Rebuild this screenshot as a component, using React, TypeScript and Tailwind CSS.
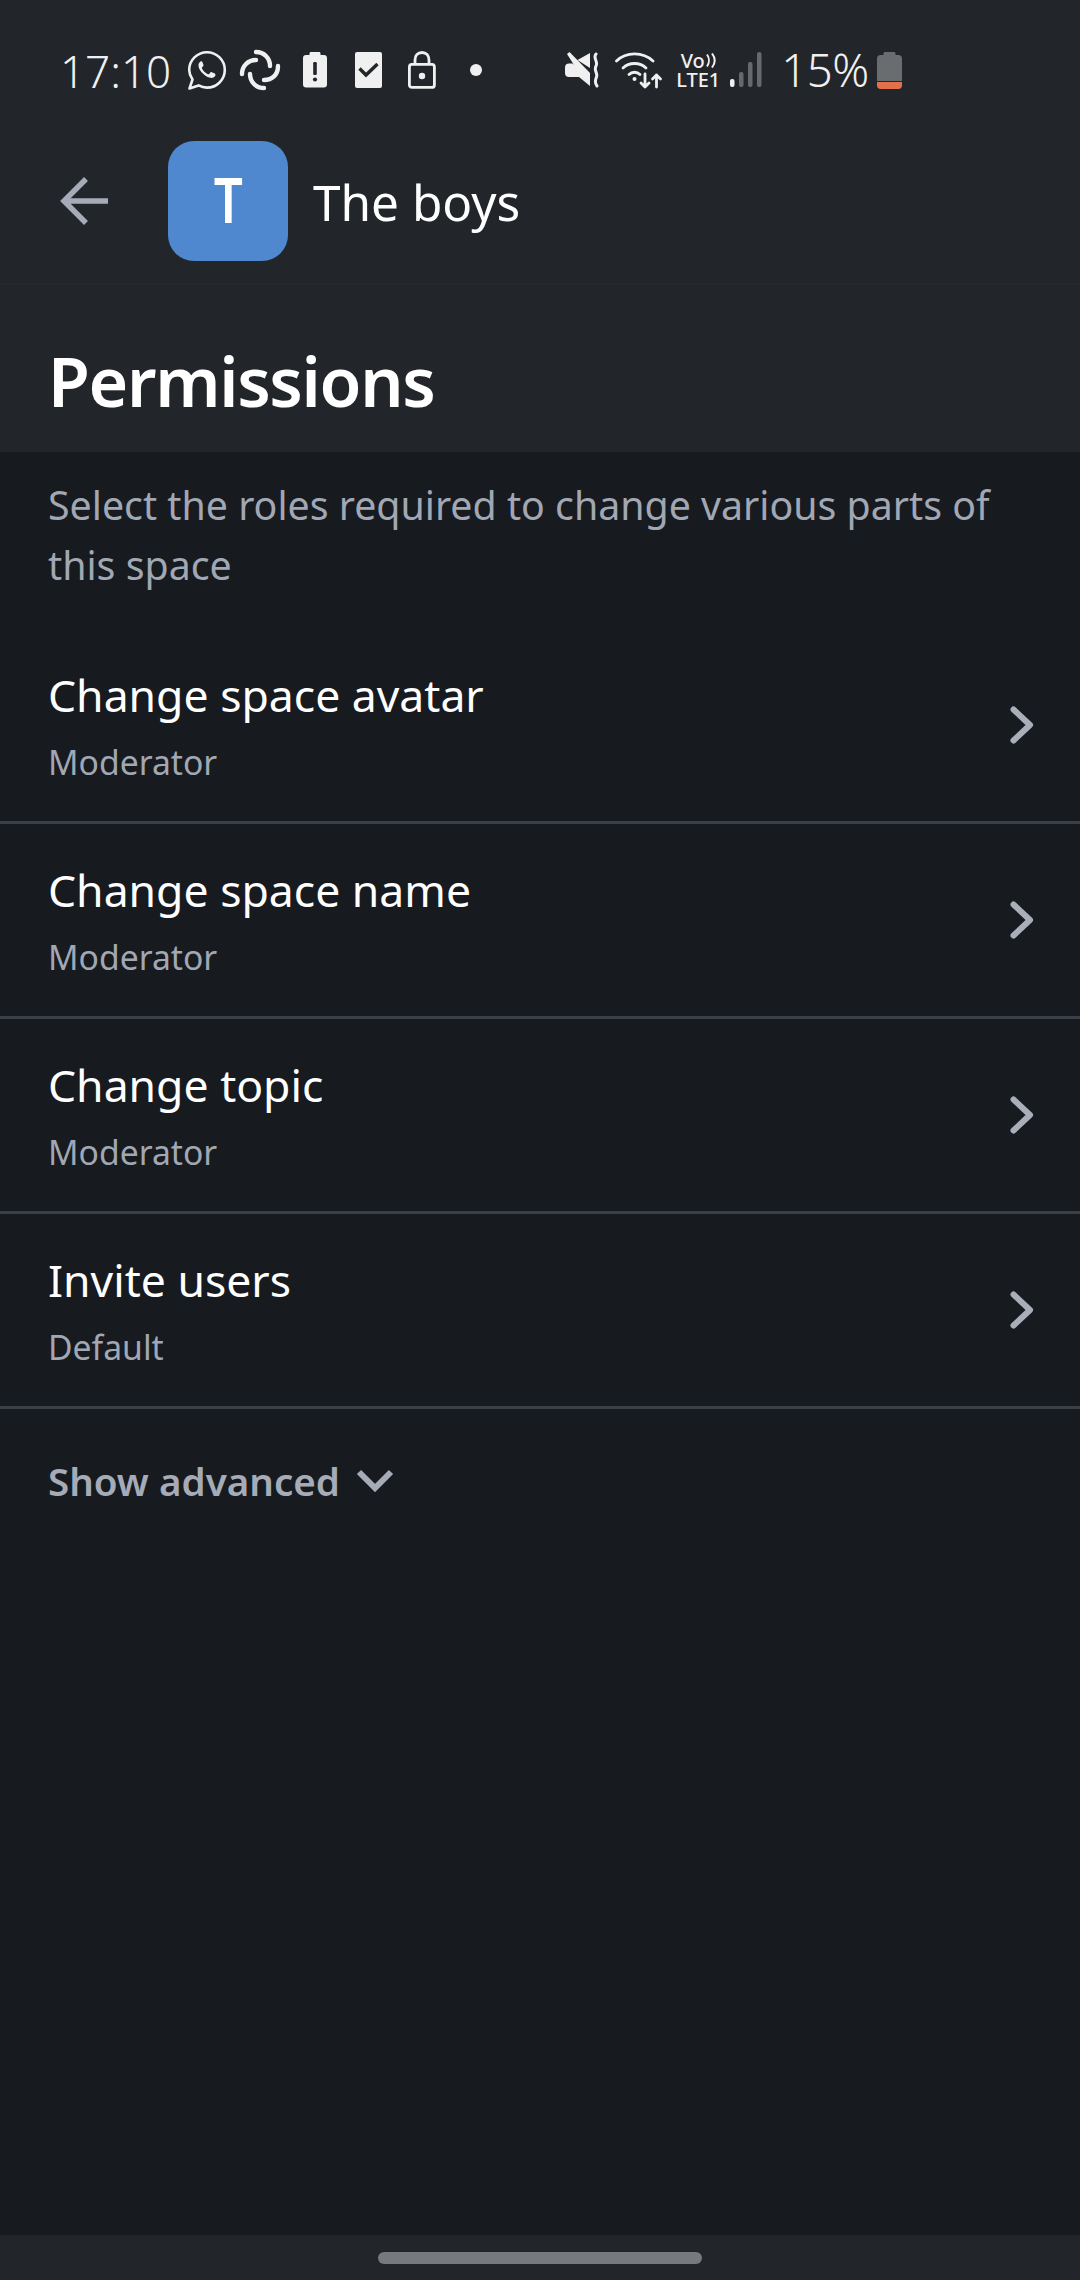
const FONT = "font-['Noto_Sans','Open_Sans',sans-serif]";

const rows = [
  { title: "Change space avatar", role: "Moderator" },
  { title: "Change space name", role: "Moderator" },
  { title: "Change topic", role: "Moderator" },
  { title: "Invite users", role: "Default" },
];

function StatusLeftIcons() {
  return (
    <div className="flex items-center">
      {/* whatsapp */}
      <svg width="40" height="42" viewBox="0 0 40 42" className="ml-[16px]" fill="none">
        <path d="M2.5 39.5 L5.5 30.5 C3.5 27.5 2.2 24.5 2.2 21 C2.2 11.2 10.2 3.2 20 3.2 C29.8 3.2 37.8 11.2 37.8 21 C37.8 30.8 29.8 38.6 20 38.6 C17 38.6 14.2 37.8 11.6 36.4 Z" stroke="#f0f0f0" strokeWidth="2.6" strokeLinejoin="round" />
        <path d="M13.5 12.5 C12 13.5 11.2 15.2 11.6 17.4 C12.4 21.6 17.6 27.6 23.4 28.8 C25.6 29.2 27.6 28.2 28.4 26.4 C28.6 25.6 28.4 25 27.8 24.6 L24.8 23.2 C24.2 23 23.8 23 23.4 23.6 L22.2 25 C21.8 25.4 21.4 25.4 20.8 25.2 C18.2 24 16.2 22 15 19.6 C14.8 19 14.8 18.6 15.2 18.2 L16.2 17 C16.6 16.6 16.6 16.2 16.4 15.6 L15.2 12.8 C14.8 12.2 14.2 12.2 13.5 12.5 Z" fill="#f0f0f0" />
      </svg>
      {/* element */}
      <svg width="42" height="44" viewBox="0 0 42 44" className="ml-[12px]" fill="none" stroke="#f0f0f0" strokeWidth="4.4" strokeLinecap="round">
        <path d="M17 4 C25 4 31 10 31 18" />
        <path d="M39 18 C39 27 33 32 25 32" />
        <path d="M25 40 C17 40 11 34 11 26" />
        <path d="M3 26 C3 18 9 12 17 12" />
      </svg>
      {/* battery alert */}
      <svg width="24" height="36" viewBox="0 0 24 36" className="ml-[22px]">
        <path d="M8 0 H16 C17 0 17.5 .6 17.5 1.6 V3 H21 C22.8 3 24 4.2 24 6 V32.5 C24 34.4 22.8 35.5 21 35.5 H3 C1.2 35.5 0 34.4 0 32.5 V6 C0 4.2 1.2 3 3 3 H6.5 V1.6 C6.5 .6 7 0 8 0 Z" fill="#f0f0f0" />
        <rect x="10.2" y="10" width="3.6" height="13" rx="1.2" fill="#22262b" />
        <circle cx="12" cy="27.5" r="2.1" fill="#22262b" />
      </svg>
      {/* checklist */}
      <svg width="27" height="36" viewBox="0 0 27 36" className="ml-[28px]">
        <rect width="27" height="36" rx="2" fill="#f0f0f0" />
        <path d="M4.5 16.5 L11 23 L22.5 12" fill="none" stroke="#22262b" strokeWidth="3.4" />
      </svg>
      {/* lock */}
      <svg width="28" height="38" viewBox="0 0 28 38" className="ml-[26px]" fill="none" stroke="#f0f0f0" strokeWidth="2.8">
        <rect x="1.4" y="13.4" width="25" height="23" rx="2.5" />
        <path d="M7 13 V9 C7 4.5 9.8 1.5 14 1.5 C18.2 1.5 21 4.5 21 9 V13" />
        <circle cx="14" cy="25" r="3.2" fill="#f0f0f0" stroke="none" />
      </svg>
      <div className="ml-[34px] h-[12px] w-[12px] rounded-full bg-[#f0f0f0]" />
    </div>
  );
}

function StatusRightIcons() {
  return (
    <div className="ml-[83px] flex items-center">
      {/* muted speaker */}
      <svg width="35" height="36" viewBox="0 0 35 36">
        <path d="M2 2 L4.5 0 L25 21 V34 L14 25 H4 C1.5 25 0 23.5 0 21 V15.5 C0 13 1.5 11.5 4 11.5 H7.5 L9 13 Z M12.5 8 L25 1 V16 Z" fill="#f0f0f0" />
        <path d="M31 2 C27.5 6 33.5 9.5 31 14 C28.5 18.5 33 21 31.5 25 C30.5 28 29 30 32 34" fill="none" stroke="#f0f0f0" strokeWidth="3" strokeLinecap="round" />
      </svg>
      {/* wifi + data arrows */}
      <svg width="48" height="38" viewBox="0 0 48 38" className="ml-[15px]" fill="none" stroke="#f0f0f0" strokeWidth="2.8" strokeLinecap="round" strokeLinejoin="round">
        <path d="M1.5 10 C11 .5 28 .5 38 10" />
        <path d="M8 17 C14 11 25 11 31 17" />
        <path d="M14 23.5 C17 20.5 22 20.5 25 23.5" />
        <circle cx="19.5" cy="28" r="2" fill="#f0f0f0" stroke="none" />
        <path d="M30 23 V36 M26 32 L30 36 L34 32" />
        <path d="M41.5 36 V24 M37.5 28 L41.5 24 L45.5 28" />
      </svg>
      {/* VoLTE */}
      <div className="ml-[13px] flex h-[37px] w-[44px] flex-col items-center text-[#f0f0f0]">
        <div className="flex h-[18px] items-center gap-[1px]">
          <span className="text-[20px] leading-[18px] font-medium">Vo</span>
          <svg width="10" height="15" viewBox="0 0 10 15" fill="none" stroke="#f0f0f0" strokeWidth="2">
            <path d="M1 1.5 C3.5 5 3.5 10 1 13.5 M6 .5 C9.5 5 9.5 10 6 14.5" />
          </svg>
        </div>
        <span className="text-[20px] leading-[19px] font-medium">LTE1</span>
      </div>
      {/* signal */}
      <svg width="32" height="36" viewBox="0 0 32 36" className="ml-[10px]">
        <rect x="0" y="27" width="4.5" height="8" rx="2" fill="#f0f0f0" />
        <rect x="9" y="20" width="4.5" height="15" rx="2" fill="#66696d" />
        <rect x="18" y="10" width="4.5" height="25" rx="2" fill="#66696d" />
        <rect x="27" y="0" width="4.5" height="35" rx="2" fill="#66696d" />
      </svg>
      <span className="ml-[19px] text-[45.5px] leading-none font-light tracking-[-0.5px] text-[#f0f0f0]">15%</span>
      {/* battery */}
      <svg width="25" height="37" viewBox="0 0 25 37" className="ml-[8px]">
        <path d="M8 0 H17 C18 0 18.5 .6 18.5 1.6 V3 H21.5 C23.6 3 25 4.4 25 6.4 V29 H0 V6.4 C0 4.4 1.4 3 3.5 3 H6.5 V1.6 C6.5 .6 7 0 8 0 Z" fill="#6a6d70" />
        <path d="M0 30 H25 V33.5 C25 35.6 23.6 37 21.5 37 H3.5 C1.4 37 0 35.6 0 33.5 Z" fill="#e2704a" />
      </svg>
    </div>
  );
}

export default function App() {
  return (
    <div className={`flex h-[2280px] w-[1080px] flex-col overflow-hidden bg-[#171a1f] ${FONT}`}>
      <div className="h-[452px] shrink-0 bg-[#22262b]">
        <div className="flex h-[141px] items-start pt-[48px] pl-[60px]">
          <span className="text-[44px] leading-[46px] font-light text-[#f0f0f0]">17:10</span>
          <div className="flex h-[44px] items-center">
            <StatusLeftIcons />
            <StatusRightIcons />
          </div>
        </div>
        <div className="flex h-[144px] items-start border-b-2 border-[#24282d]">
          <svg width="48" height="48" viewBox="0 0 48 48" className="mt-[36px] ml-[60px]" fill="none" stroke="#a5abb7" strokeWidth="5.5">
            <path d="M48 24 H4 M26 2 L4 24 L26 46" />
          </svg>
          <div className="ml-[60px] flex h-[120px] w-[120px] items-center justify-center rounded-[26px] bg-[#4f88cf] text-white">
            <span className="-translate-y-[2px] scale-x-[0.8] text-[64px] leading-none font-semibold">T</span>
          </div>
          <span className="mt-[31px] ml-[25px] text-[49.5px] leading-[60px] text-white">The boys</span>
        </div>
        <h1 className="pt-[53px] pl-[48px] text-[68px] leading-[86px] font-semibold tracking-[-1.3px] text-white">Permissions</h1>
      </div>

      <p className="px-[48px] pt-[23px] text-[39.3px] leading-[60px] text-[#a1a7b3]">
        Select the roles required to change various parts of this space
      </p>

      <div className="mt-[34px]">
        {rows.map((r) => (
          <div key={r.title} className="flex h-[195px] items-center justify-between border-b-[3px] border-[#3a4047] pr-[46px] pl-[48px]">
            <div>
              <div className="text-[44.5px] leading-[60px] text-white">{r.title}</div>
              <div className="mt-[14px] text-[33.7px] leading-[46px] text-[#a1a7b3]">{r.role}</div>
            </div>
            <svg width="24" height="38" viewBox="0 0 24 38" fill="none" stroke="#a9aeb8" strokeWidth="6" strokeLinecap="round" strokeLinejoin="round">
              <path d="M3.5 3.5 L20 19 L3.5 34.5" />
            </svg>
          </div>
        ))}
      </div>

      <div className="mt-[45px] flex items-center pl-[48px]">
        <span className="text-[38.6px] leading-[54px] font-semibold text-[#a5abb7]">Show advanced</span>
        <svg width="38" height="26" viewBox="0 0 38 26" className="ml-[16px]" fill="none" stroke="#a5abb7" strokeWidth="6">
          <path d="M3 4 L19 20 L35 4" />
        </svg>
      </div>

      <div className="mt-auto flex h-[45px] shrink-0 items-center justify-center bg-[#22262b]">
        <div className="h-[12px] w-[324px] rounded-full bg-[#77797c]" />
      </div>
    </div>
  );
}
